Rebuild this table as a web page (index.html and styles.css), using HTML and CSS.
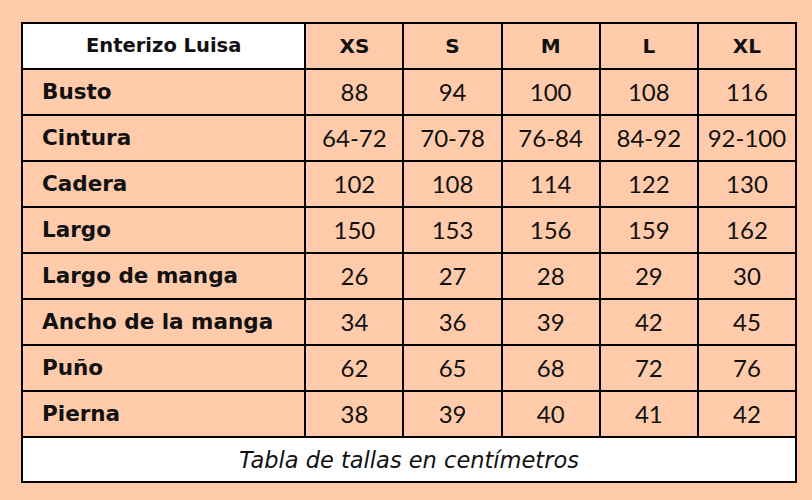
FILE: index.html
```html
<!DOCTYPE html>
<html lang="es">
<head>
<meta charset="utf-8">
<title>Enterizo Luisa</title>
<link rel="stylesheet" href="styles.css">
</head>
<body>
<table class="sizes">
  <colgroup>
    <col class="col-label">
    <col class="col-size"><col class="col-size"><col class="col-size"><col class="col-size"><col class="col-size">
  </colgroup>
  <thead>
    <tr class="head">
      <th class="title">Enterizo Luisa</th>
      <th>XS</th><th>S</th><th>M</th><th>L</th><th>XL</th>
    </tr>
  </thead>
  <tbody>
    <tr><th class="label">Busto</th><td>88</td><td>94</td><td>100</td><td>108</td><td>116</td></tr>
    <tr><th class="label">Cintura</th><td>64-72</td><td>70-78</td><td>76-84</td><td>84-92</td><td>92-100</td></tr>
    <tr><th class="label">Cadera</th><td>102</td><td>108</td><td>114</td><td>122</td><td>130</td></tr>
    <tr><th class="label">Largo</th><td>150</td><td>153</td><td>156</td><td>159</td><td>162</td></tr>
    <tr><th class="label">Largo de manga</th><td>26</td><td>27</td><td>28</td><td>29</td><td>30</td></tr>
    <tr><th class="label">Ancho de la manga</th><td>34</td><td>36</td><td>39</td><td>42</td><td>45</td></tr>
    <tr><th class="label">Puño</th><td>62</td><td>65</td><td>68</td><td>72</td><td>76</td></tr>
    <tr><th class="label">Pierna</th><td>38</td><td>39</td><td>40</td><td>41</td><td>42</td></tr>
  </tbody>
  <tfoot>
    <tr><td class="note" colspan="6">Tabla de tallas en centímetros</td></tr>
  </tfoot>
</table>
</body>
</html>
```

FILE: styles.css
```css
html, body {
  margin: 0;
  padding: 0;
  background: #ffcbaa;
}
body {
  padding: 22px 0 0 21px;
  font-family: "Lato", "DejaVu Sans", sans-serif;
  color: #111;
}
.sizes {
  border-collapse: collapse;
  table-layout: fixed;
  width: 776px;
  background: #ffcbaa;
}
.col-label { width: 283px; }
.col-size { width: 98px; }
.sizes th, .sizes td {
  border: 2px solid #000;
  padding: 0;
  height: 44px;
  text-align: center;
  font-size: 24px;
  line-height: 26px;
  font-weight: 400;
}
.sizes .head th {
  font-family: "DejaVu Sans", sans-serif;
  font-weight: 700;
  font-size: 20px;
}
.sizes .head .title {
  background: #fff;
  font-size: 19.5px;
}
.sizes .label {
  font-family: "DejaVu Sans", sans-serif;
  text-align: left;
  padding-left: 19px;
  font-weight: 700;
  font-size: 21.5px;
}
.sizes .note {
  font-family: "DejaVu Sans", sans-serif;
  background: #fff;
  font-style: italic;
  height: 43px;
  font-size: 22.5px;
}
```
